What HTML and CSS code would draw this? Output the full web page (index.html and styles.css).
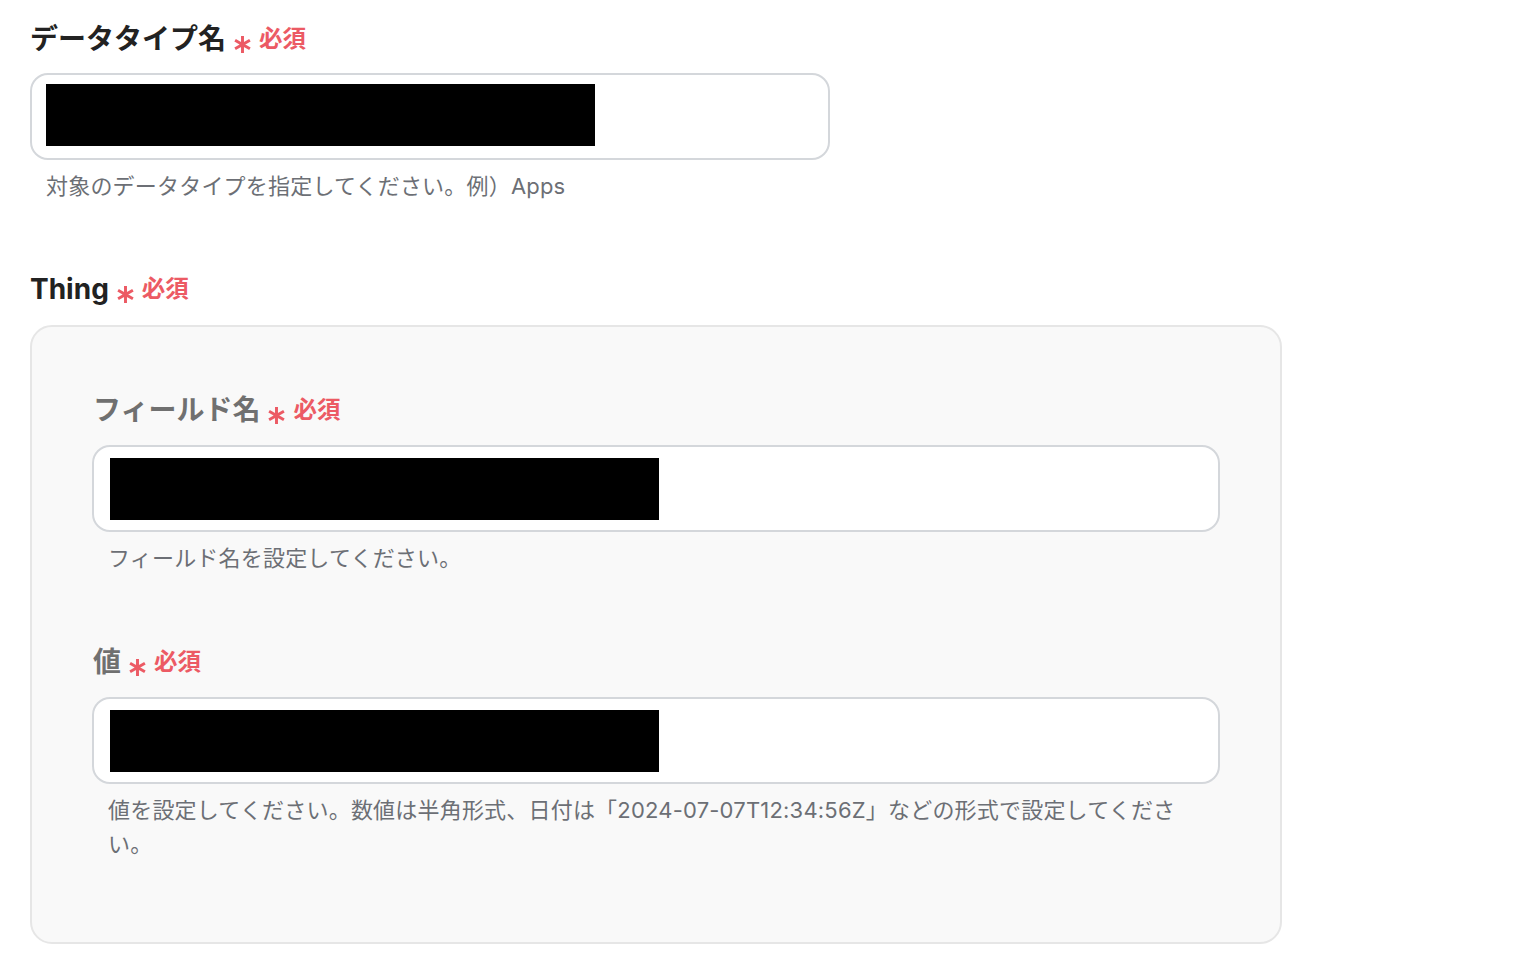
FILE: index.html
```html
<!DOCTYPE html>
<html lang="ja">
<head>
<meta charset="utf-8">
<link rel="stylesheet" href="styles.css">
</head>
<body>
<div class="page">
  <div class="field">
    <div class="label">データタイプ名<span class="req"><svg class="ast" viewBox="0 0 20 20"><path d="M10 1v18M2.2 5.5l15.6 9M2.2 14.5l15.6-9"/></svg>必須</span></div>
    <div class="input"><div class="mask"></div></div>
    <div class="help">対象のデータタイプを指定してください。例）Apps</div>
  </div>

  <div class="field">
    <div class="label">Thing<span class="req"><svg class="ast" viewBox="0 0 20 20"><path d="M10 1v18M2.2 5.5l15.6 9M2.2 14.5l15.6-9"/></svg>必須</span></div>
    <div class="panel">
      <div class="field inner">
        <div class="label sub">フィールド名<span class="req"><svg class="ast" viewBox="0 0 20 20"><path d="M10 1v18M2.2 5.5l15.6 9M2.2 14.5l15.6-9"/></svg>必須</span></div>
        <div class="input wide"><div class="mask"></div></div>
        <div class="help">フィールド名を設定してください。</div>
      </div>
      <div class="field inner">
        <div class="label sub">値<span class="req"><svg class="ast" viewBox="0 0 20 20"><path d="M10 1v18M2.2 5.5l15.6 9M2.2 14.5l15.6-9"/></svg>必須</span></div>
        <div class="input wide"><div class="mask"></div></div>
        <div class="help">値を設定してください。数値は半角形式、日付は「2024-07-07T12:34:56Z」などの形式で設定してください。</div>
      </div>
    </div>
  </div>
</div>
</body>
</html>
```

FILE: styles.css
```css
* { box-sizing: border-box; }
html, body { margin: 0; padding: 0; background: #fff; }
body {
  font-family: "Inter", "Noto Sans CJK JP", sans-serif;
  color: #222;
}
.page {
  padding: 19px 30px 0 30px;
  width: 1282px;
  box-sizing: content-box;
}
.field + .field { margin-top: 66px; }
.inner + .inner { margin-top: 67px; }
.label {
  display: flex;
  align-items: center;
  font-size: 28px;
  font-weight: 700;
  line-height: 40px;
  height: 40px;
  color: #222;
}
.label.sub { color: #707070; }
.req {
  display: inline-flex;
  align-items: center;
  color: #ec5a64;
  font-size: 23.5px;
  font-weight: 700;
  margin-left: 7px;
}
.ast {
  width: 19px;
  height: 19px;
  margin-top: 10px;
  margin-right: 7px;
  fill: none;
  stroke: #ec5a64;
  stroke-width: 3.1;
}
.input {
  margin-top: 14px;
  width: 800px;
  height: 87px;
  border: 2px solid #d4d7db;
  border-radius: 18px;
  background: #fff;
  padding: 9px 14px;
}
.input.wide { width: 100%; padding: 11px 16px; margin-top: 15px; }
.mask {
  width: 549px;
  height: 62px;
  background: #000;
}
.help {
  margin-top: 9px;
  padding: 0 16px;
  font-size: 22px;
  letter-spacing: 0.2px;
  line-height: 34px;
  color: #6c6f75;
  font-weight: 400;
}
.panel {
  margin-top: 16px;
  width: 1252px;
  background: #f9f9f9;
  border: 2px solid #e6e6e6;
  border-radius: 22px;
  padding: 63px 60px 81px 60px;
}
.inner .label { padding-left: 1px; }
```
